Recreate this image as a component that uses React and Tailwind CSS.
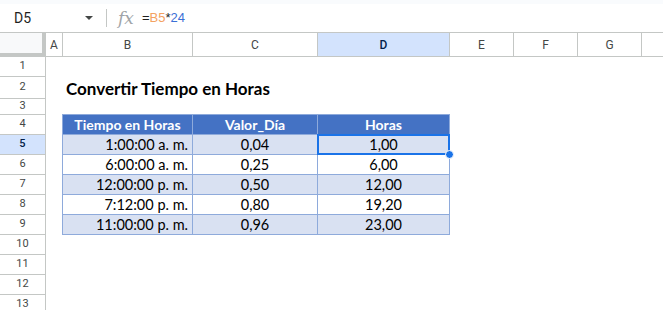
import React from "react";

const rowHeights = [
  "h-[20px]", "h-[22px]", "h-[16px]", "h-[20px]", "h-[20px]", "h-[20px]", "h-[20px]",
  "h-[20px]", "h-[20px]", "h-[20px]", "h-[20px]", "h-[20px]", "h-[20px]",
];

const cols = [
  { l: "A", w: "w-[17px]" },
  { l: "B", w: "w-[130px]" },
  { l: "C", w: "w-[125px]" },
  { l: "D", w: "w-[132px]", sel: true },
  { l: "E", w: "w-[64px]" },
  { l: "F", w: "w-[64px]" },
  { l: "G", w: "w-[64px]" },
];

const data = [
  ["1:00:00 a. m.", "0,04", "1,00"],
  ["6:00:00 a. m.", "0,25", "6,00"],
  ["12:00:00 p. m.", "0,50", "12,00"],
  ["7:12:00 p. m.", "0,80", "19,20"],
  ["11:00:00 p. m.", "0,96", "23,00"],
];

const cellFont = { fontFamily: "Lato, 'Open Sans', sans-serif" };

export default function App() {
  return (
    <div
      className="w-[663px] h-[310px] overflow-hidden bg-white"
      style={{ fontFamily: "Roboto, Arial, sans-serif" }}
    >
      <div className="h-[4px] bg-[#f9fbfd]" />
      {/* formula bar */}
      <div className="h-[28px] flex items-center">
        <div className="w-[106px] flex items-center pl-[14px] pr-[13px]">
          <span className="text-[14px] text-[#1f1f1f] flex-1">D5</span>
          <svg width="8" height="4" viewBox="0 0 8 4">
            <path d="M0 0 L8 0 L4 4 Z" fill="#444746" />
          </svg>
        </div>
        <div className="w-px h-[18px] bg-[#c4c7c5]" />
        <span
          className="ml-[11px] w-[24px] text-[17px] italic text-[#a0a4a8] leading-none"
          style={{ fontFamily: "'DejaVu Serif', 'Liberation Serif', serif" }}
        >
          fx
        </span>
        <span className="text-[13px] text-[#1f1f1f]" style={{ fontFamily: "Arial, 'Liberation Sans', sans-serif" }}>
          =<span className="text-[#f4a261]">B5</span>*<span className="text-[#3b6fd6]">24</span>
        </span>
      </div>
      {/* column header */}
      <div className="flex border-t border-[#c4c7c5] h-[25px]">
        <div className="w-[46px] h-[24px] bg-[#f8f9fa] border-r-4 border-b-4 border-[#c4c7c5]" />
        {cols.map((c) => (
          <div
            key={c.l}
            className={`${c.w} h-[24px] border-r border-b border-[#c4c7c5] flex items-center justify-center text-[12px] ${
              c.sel ? "bg-[#d3e3fd] text-[#041e49] font-medium" : "text-[#444746]"
            }`}
          >
            {c.l}
          </div>
        ))}
        <div className="flex-1 h-[24px] border-b border-[#c4c7c5]" />
      </div>
      {/* body */}
      <div className="flex">
        <div className="w-[46px] flex flex-col">
          {rowHeights.map((h, i) => (
            <div
              key={i}
              className={`${h} shrink-0 border-r border-b border-[#c4c7c5] flex items-center justify-center text-[11px] ${
                i === 4 ? "bg-[#d3e3fd] text-[#041e49] font-medium" : "text-[#444746]"
              }`}
            >
              {i + 1}
            </div>
          ))}
        </div>
        <div className="flex-1 flex flex-col" style={cellFont}>
          <div className="h-[20px]" />
          <div className="h-[22px] flex items-end pl-[20px] pb-[2px]">
            <span className="text-[17px] font-bold text-black whitespace-nowrap leading-none">
              Convertir Tiempo en Horas
            </span>
          </div>
          <div className="h-[15px]" />
          <div className="ml-[16px] w-[388px] grid grid-cols-[130px_125px_132px] border-l border-t border-[#8eaadb] text-[14.5px] text-black">
            {["Tiempo en Horas", "Valor_Día", "Horas"].map((t) => (
              <div
                key={t}
                className="h-[20px] bg-[#4472c4] border-r border-b border-[#8eaadb] flex items-center justify-center font-bold text-white text-[14px]"
              >
                {t}
              </div>
            ))}
            {data.map((r, i) => {
              const bg = i % 2 === 0 ? "bg-[#d9e1f2]" : "bg-white";
              return (
                <React.Fragment key={i}>
                  <div className={`h-[20px] ${bg} border-r border-b border-[#8eaadb] flex items-center justify-end pr-[4px]`}>
                    {r[0]}
                  </div>
                  <div className={`h-[20px] ${bg} border-r border-b border-[#8eaadb] flex items-center justify-center`}>
                    {r[1]}
                  </div>
                  <div className={`relative h-[20px] ${bg} border-r border-b border-[#8eaadb] flex items-center justify-center`}>
                    {r[2]}
                    {i === 0 && (
                      <>
                        <div className="absolute -inset-[1px] border-2 border-[#1a73e8] z-10" />
                        <div className="absolute -right-[5px] -bottom-[5px] w-[9px] h-[9px] rounded-full bg-[#1a73e8] border border-white z-20" />
                      </>
                    )}
                  </div>
                </React.Fragment>
              );
            })}
          </div>
        </div>
      </div>
    </div>
  );
}
